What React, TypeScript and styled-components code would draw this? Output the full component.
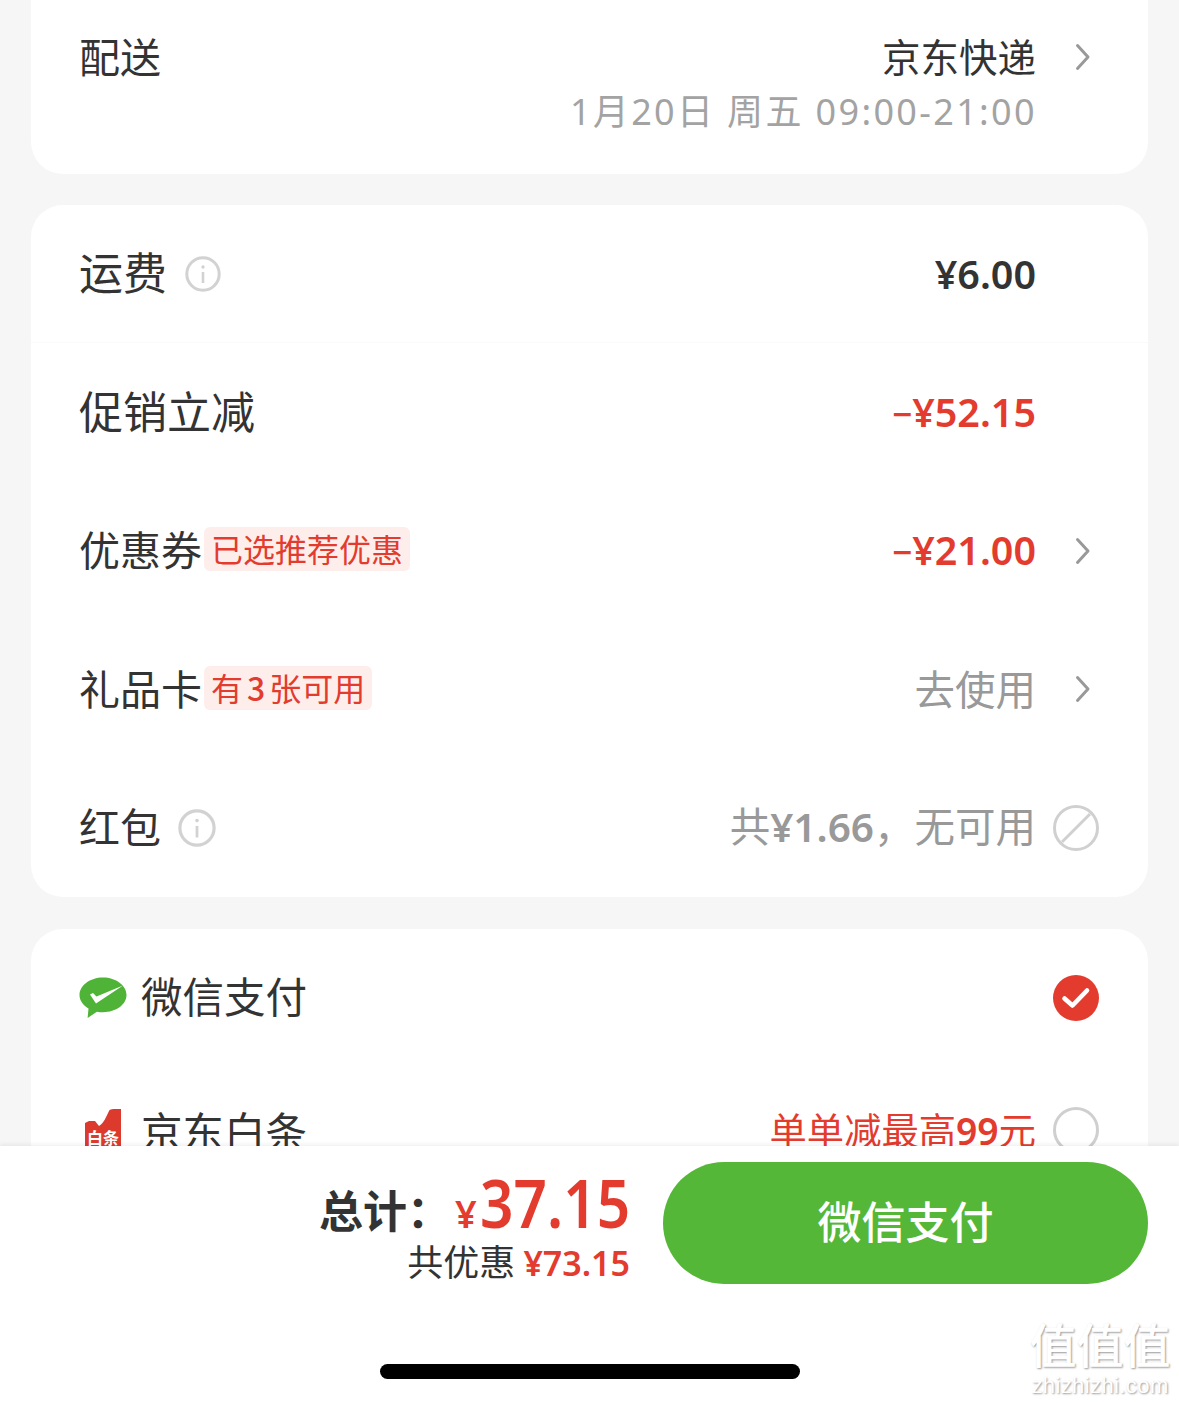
import React from 'react';
import styled, { createGlobalStyle } from 'styled-components';

const RED = '#e33b2e';
const CJK = '"Noto Sans CJK SC", "Noto Sans", sans-serif';
const NUM = '"Noto Sans", "Noto Sans CJK SC", sans-serif';

const GlobalStyle = createGlobalStyle`
    html, body {
        margin: 0;
        padding: 0;
        background: #f6f6f6;
    }
    * {
        box-sizing: border-box;
    }
`;

const Page = styled.div`
    position: relative;
    width: 1179px;
    height: 1403px;
    display: flex;
    flex-direction: column;
    overflow: hidden;
    background: #f6f6f6;
    font-family: ${CJK};
    color: #333;
`;

const Scroller = styled.div`
    flex: 1;
    min-height: 0;
    overflow: hidden;
    display: flex;
    flex-direction: column;
    gap: 32px;
    padding: 0 31px;
`;

const Card = styled.section`
    flex-shrink: 0;
    background: #fff;
    border-radius: 32px;
`;

const TopCard = styled(Card)`
    height: 174px;
    margin-bottom: -1px;
    border-radius: 0 0 32px 32px;
    padding: 27px 49px 0 48px;
    display: flex;
    justify-content: space-between;
`;

const PayCard = styled(Card)`
    padding-top: 3px;
`;

const Row = styled.div<{ $divided?: boolean }>`
    height: 138.4px;
    padding: 0 49px 0 48px;
    display: flex;
    align-items: center;
    justify-content: space-between;
    border-bottom: ${p => (p.$divided ? '1px solid #fafafa' : 'none')};
`;

const PayRow = styled(Row)`
    height: 132px;
`;

const Left = styled.div`
    display: flex;
    align-items: center;
`;

const Right = styled.div`
    display: flex;
    align-items: center;
`;

const Label = styled.span<{ $size?: number }>`
    font-size: ${p => p.$size ?? 42}px;
    line-height: 56px;
    padding-bottom: 5px;
    color: #333;
    white-space: nowrap;
`;

const BaitiaoLabel = styled(Label)`
    margin-top: 5px;
`;

const Value = styled.span<{ $color?: string; $size?: number }>`
    font-size: ${p => p.$size ?? 40.5}px;
    line-height: 56px;
    padding-bottom: 3px;
    color: ${p => p.$color ?? '#999'};
    white-space: nowrap;
`;

const PromoValue = styled(Value)`
    margin-top: 4px;
`;

const Amount = styled.span<{ $color?: string }>`
    font-family: ${NUM};
    font-size: 39.5px;
    line-height: 56px;
    font-weight: 600;
    color: ${p => p.$color ?? '#333'};
    white-space: nowrap;
`;

const Minus = styled.span`
    font-size: 35px;
`;

const InlineNumber = styled.span`
    font-family: ${NUM};
    font-weight: 600;
`;

const Slot = styled.div`
    width: 46px;
    height: 46px;
    margin-left: 17px;
    display: flex;
    align-items: center;
    flex-shrink: 0;
`;

const Badge = styled.span`
    margin-left: 2px;
    margin-bottom: 3px;
    height: 44px;
    padding: 0 7px;
    border-radius: 6px;
    background: #fdeeec;
    color: ${RED};
    font-size: 32px;
    line-height: 42px;
    white-space: nowrap;
`;

const BadgeNumber = styled.span`
    margin: 0 4px;
    font-weight: 500;
`;

const DeliveryValues = styled.div`
    display: flex;
    flex-direction: column;
    align-items: flex-end;
`;

const DeliveryTop = styled.div`
    display: flex;
    align-items: center;
`;

const DeliveryTime = styled.div`
    margin-right: 62px;
    font-family: ${NUM};
    font-size: 36px;
    line-height: 52px;
    letter-spacing: 2.35px;
    color: #a3a3a3;
    white-space: nowrap;
`;

const PayName = styled.div`
    display: flex;
    align-items: center;
    gap: 14px;
`;

const Footer = styled.footer`
    flex-shrink: 0;
    position: relative;
    height: 257px;
    background: #fff;
    box-shadow: 0 -2px 4px rgba(0, 0, 0, 0.06);
    padding: 15px 31px 0;
`;

const FooterBar = styled.div`
    display: flex;
    align-items: center;
    justify-content: flex-end;
    gap: 33px;
`;

const Totals = styled.div`
    display: flex;
    flex-direction: column;
    align-items: flex-end;
`;

const TotalLine = styled.div`
    display: flex;
    align-items: baseline;
    height: 77px;
    padding-top: 2px;
`;

const TotalLabel = styled.span`
    font-size: 44px;
    font-weight: 700;
    color: #333;
    margin-right: 4px;
`;

const TotalCurrency = styled.span`
    font-family: ${NUM};
    font-size: 38px;
    font-weight: 600;
    color: ${RED};
    margin-right: 3px;
`;

const TotalAmount = styled.span`
    display: inline-block;
    margin-left: -19px;
    transform: scaleX(0.887);
    transform-origin: right;
    font-family: ${NUM};
    font-size: 66px;
    line-height: 78px;
    font-weight: 600;
    color: ${RED};
`;

const SavedLine = styled.div`
    display: flex;
    align-items: baseline;
    gap: 8px;
    font-size: 36px;
    line-height: 44px;
    color: #333;
`;

const SavedAmount = styled.span`
    font-family: ${NUM};
    font-size: 34px;
    font-weight: 600;
    color: ${RED};
`;

const PayButton = styled.button`
    width: 485px;
    height: 122px;
    padding: 0 0 6px;
    border: none;
    border-radius: 61px;
    background: #55b737;
    color: #fff;
    font-family: ${CJK};
    font-size: 44px;
    font-weight: 500;
`;

const HomeIndicator = styled.div`
    position: absolute;
    left: 380px;
    bottom: 24px;
    width: 420px;
    height: 15px;
    border-radius: 8px;
    background: #000;
`;

const Watermark = styled.div`
    position: absolute;
    right: 8px;
    bottom: 5px;
    width: 142px;
    display: flex;
    flex-direction: column;
    align-items: center;
    gap: 3px;
    color: #fff;
    text-shadow: 1px 1px 2px rgba(0, 0, 0, 0.4);
    pointer-events: none;
`;

const WatermarkGlyphs = styled.div`
    font-size: 47px;
    font-weight: 500;
    line-height: 56px;
    white-space: nowrap;
`;

const WatermarkUrl = styled.div`
    font-family: "Liberation Sans", sans-serif;
    font-size: 22px;
    line-height: 24px;
    letter-spacing: 0.4px;
    white-space: nowrap;
`;

const Chevron = () => (
    <svg width="16" height="28" viewBox="0 0 16 28" fill="none" style={{ marginLeft: 22 }}>
        <path d="M2.5 2.5 13 14 2.5 25.5" stroke="#999" strokeWidth="3" strokeLinecap="round" strokeLinejoin="round" />
    </svg>
);

const InfoIcon = ({ size, ml }: { size: number; ml: number }) => (
    <svg width={size} height={size} viewBox="0 0 36 36" fill="none" style={{ marginLeft: ml }}>
        <circle cx="18" cy="18" r="16.2" stroke="#d2d2d2" strokeWidth="3" />
        <circle cx="18" cy="11" r="1.7" fill="#d2d2d2" />
        <path d="M18 16v11" stroke="#d2d2d2" strokeWidth="2.6" />
    </svg>
);

const DisabledRadio = () => (
    <svg width="46" height="46" viewBox="0 0 46 46" fill="none">
        <circle cx="23" cy="23" r="21.5" stroke="#d0d0d0" strokeWidth="3" />
        <path d="M9 37 37 9" stroke="#d0d0d0" strokeWidth="3" />
    </svg>
);

const CheckedRadio = () => (
    <svg width="46" height="46" viewBox="0 0 46 46">
        <circle cx="23" cy="23" r="23" fill={RED} />
        <path d="M11.5 23.5 19.5 30.5 34 15.5" fill="none" stroke="#fff" strokeWidth="4.6" strokeLinecap="round" strokeLinejoin="round" />
    </svg>
);

const EmptyRadio = () => (
    <svg width="46" height="46" viewBox="0 0 46 46" fill="none">
        <circle cx="23" cy="23" r="21.5" stroke="#cfcfcf" strokeWidth="3" />
    </svg>
);

const WechatLogo = () => (
    <svg width="48" height="42" viewBox="0 0 48 42">
        <path
            d="M24 .5C11 .5.5 8.600.5 18c0 5.400 3.500 10.300 9 13.400L8.600 41l9.300-6.300c2 .4 4 .5 6.100.5 13 0 23.500-7.700 23.500-17.200S37 .5 24 .5Z"
            fill="#4fb337"
        />
        <path d="M11 17.500l3-1.500 3.500 3.500L44 8.500 17 26.500Z" fill="#fff" />
    </svg>
);

const BaitiaoLogo = () => (
    <svg width="36" height="42" viewBox="0 0 36 42" style={{ marginLeft: 6, marginRight: 6 }}>
        <path d="M0 14 4 12h6l4 5c5-3 7-9 10-15 1-2 3-2 12-2v42H0Z" fill="#dd3a2e" />
        <text x="18" y="35" textAnchor="middle" fontSize="16" fontWeight="700" fill="#fff" fontFamily={CJK}>白条</text>
    </svg>
);

const App = () => {
    return (
        <Page>
            <GlobalStyle />
            <Scroller>
                <TopCard>
                    <Label $size={41}>配送</Label>
                    <DeliveryValues>
                        <DeliveryTop>
                            <Value $color="#333" $size={38.5}>京东快递</Value>
                            <Slot><Chevron /></Slot>
                        </DeliveryTop>
                        <DeliveryTime>1月20日 周五 09:00-21:00</DeliveryTime>
                    </DeliveryValues>
                </TopCard>

                <Card>
                    <Row $divided>
                        <Left>
                            <Label $size={44}>运费</Label>
                            <InfoIcon size={36} ml={18} />
                        </Left>
                        <Right>
                            <Amount>¥6.00</Amount>
                            <Slot />
                        </Right>
                    </Row>
                    <Row>
                        <Left><Label $size={44}>促销立减</Label></Left>
                        <Right>
                            <Amount $color={RED}><Minus>−</Minus>¥52.15</Amount>
                            <Slot />
                        </Right>
                    </Row>
                    <Row>
                        <Left>
                            <Label $size={41}>优惠券</Label>
                            <Badge>已选推荐优惠</Badge>
                        </Left>
                        <Right>
                            <Amount $color={RED}><Minus>−</Minus>¥21.00</Amount>
                            <Slot><Chevron /></Slot>
                        </Right>
                    </Row>
                    <Row>
                        <Left>
                            <Label $size={41}>礼品卡</Label>
                            <Badge>有<BadgeNumber>3</BadgeNumber>张可用</Badge>
                        </Left>
                        <Right>
                            <Value>去使用</Value>
                            <Slot><Chevron /></Slot>
                        </Right>
                    </Row>
                    <Row>
                        <Left>
                            <Label $size={41}>红包</Label>
                            <InfoIcon size={38} ml={17} />
                        </Left>
                        <Right>
                            <Value>共<InlineNumber>¥1.66</InlineNumber>，无可用</Value>
                            <Slot><DisabledRadio /></Slot>
                        </Right>
                    </Row>
                </Card>

                <PayCard>
                    <PayRow>
                        <PayName>
                            <WechatLogo />
                            <Label $size={41.5}>微信支付</Label>
                        </PayName>
                        <Right>
                            <Slot><CheckedRadio /></Slot>
                        </Right>
                    </PayRow>
                    <PayRow>
                        <PayName>
                            <BaitiaoLogo />
                            <BaitiaoLabel $size={41.5}>京东白条</BaitiaoLabel>
                        </PayName>
                        <Right>
                            <PromoValue $color={RED} $size={37.3}>单单减最高<InlineNumber>99</InlineNumber>元</PromoValue>
                            <Slot><EmptyRadio /></Slot>
                        </Right>
                    </PayRow>
                </PayCard>
            </Scroller>

            <Footer>
                <FooterBar>
                    <Totals>
                        <TotalLine>
                            <TotalLabel>总计：</TotalLabel>
                            <TotalCurrency>¥</TotalCurrency>
                            <TotalAmount>37.15</TotalAmount>
                        </TotalLine>
                        <SavedLine>
                            共优惠
                            <SavedAmount>¥73.15</SavedAmount>
                        </SavedLine>
                    </Totals>
                    <PayButton>微信支付</PayButton>
                </FooterBar>
                <HomeIndicator />
            </Footer>

            <Watermark>
                <WatermarkGlyphs>值值值</WatermarkGlyphs>
                <WatermarkUrl>zhizhizhi.com</WatermarkUrl>
            </Watermark>
        </Page>
    );
};

export default App;
